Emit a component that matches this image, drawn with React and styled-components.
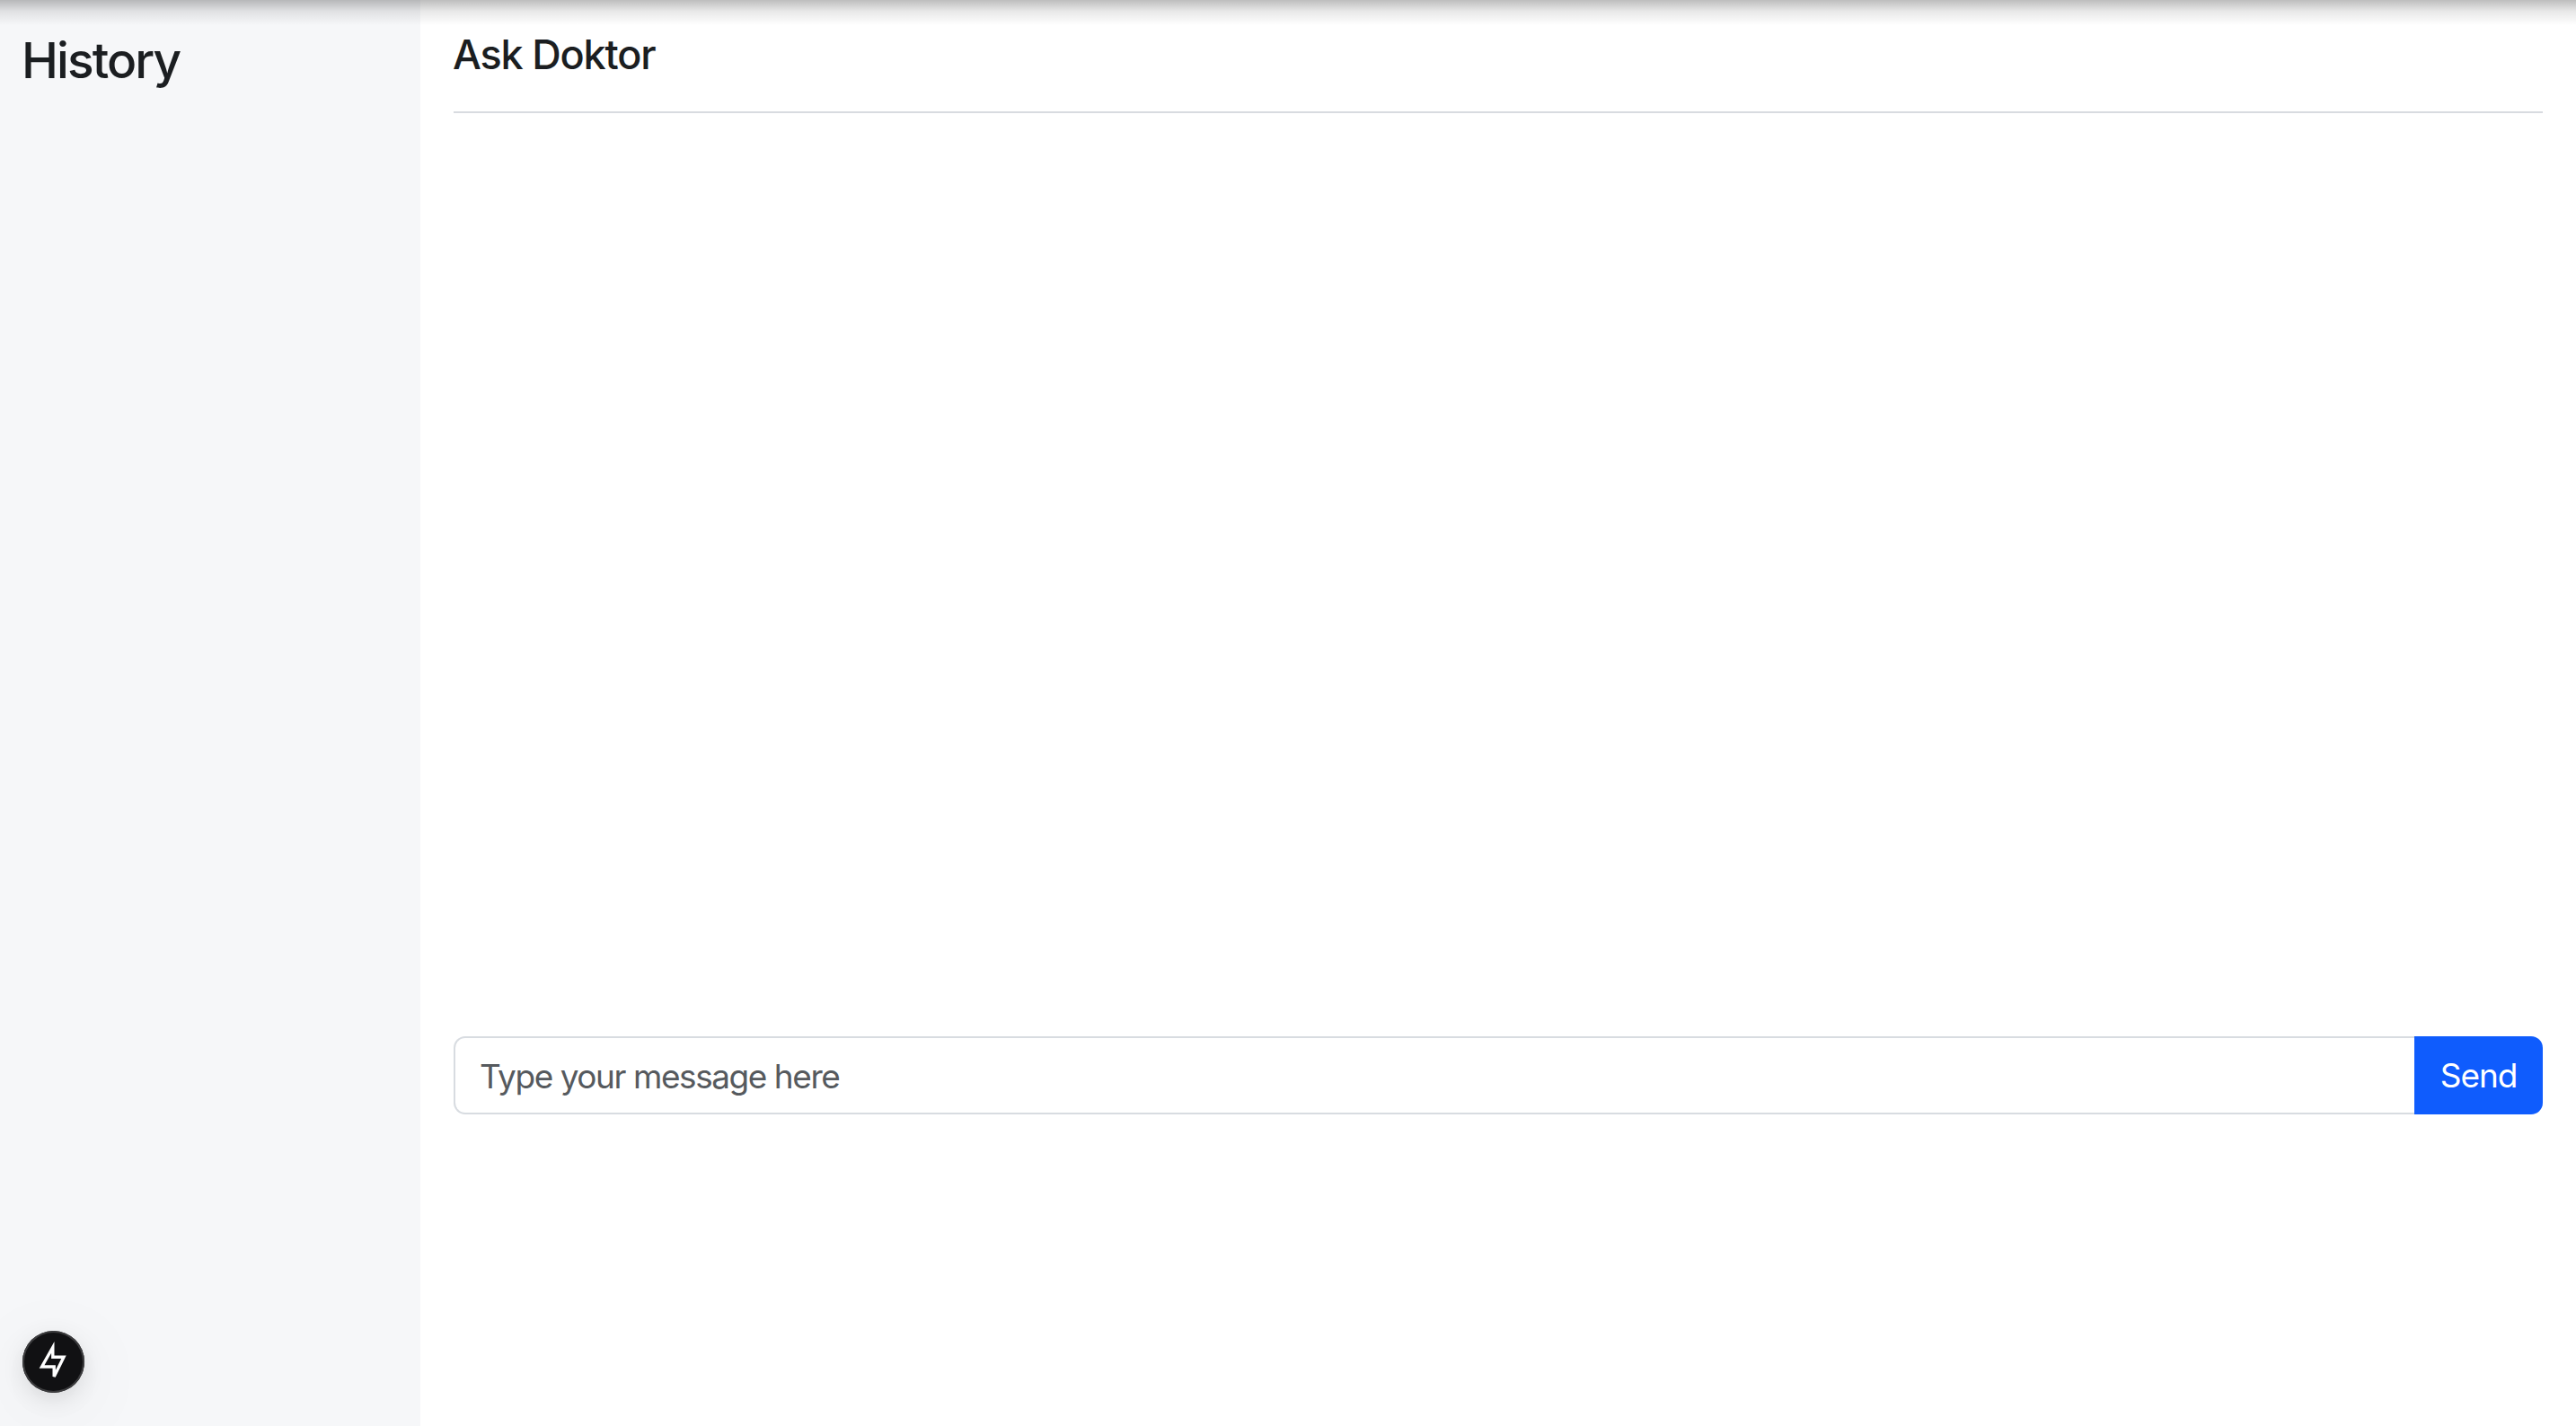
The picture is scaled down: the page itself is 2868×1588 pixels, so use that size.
import React from 'react'
import styled, { createGlobalStyle } from 'styled-components'

const GlobalStyle = createGlobalStyle`
  html, body {
    margin: 0;
    padding: 0;
    height: 100%;
    background: #fff;
    font-family: Inter, "Liberation Sans", sans-serif;
    color: #1b1e21;
  }
  * { box-sizing: border-box; }
`

export default function App() {
  return (
    <Page>
      <GlobalStyle />
      <TopShade />
      <Sidebar>
        <SideTitle>History</SideTitle>
      </Sidebar>
      <Main>
        <Header>
          <Title>Ask Doktor</Title>
        </Header>
        <Messages />
        <InputRow>
          <MessageInput placeholder="Type your message here" />
          <SendButton>Send</SendButton>
        </InputRow>
      </Main>
      <DevBadge>
        <svg width="69" height="69" viewBox="0 0 69 69" fill="none">
          <path
            d="M33.8 18.5V29.2H46L35.2 51V40H21.6Z"
            stroke="#fff"
            strokeWidth="3.4"
            strokeLinejoin="miter"
          />
        </svg>
      </DevBadge>
    </Page>
  )
}

const Page = styled.div`
  position: relative;
  display: flex;
  height: 1588px;
  overflow: hidden;
`
const TopShade = styled.div`
  position: absolute;
  top: 0;
  left: 0;
  right: 0;
  height: 28px;
  background: linear-gradient(to bottom, rgba(0, 0, 0, 0.26), rgba(0, 0, 0, 0.09) 45%, rgba(0, 0, 0, 0));
`
const Sidebar = styled.aside`
  width: 468px;
  flex-shrink: 0;
  background: #f6f7f9;
  padding: 32px 24px;
`
const SideTitle = styled.h2`
  margin: 0;
  font-size: 55px;
  line-height: 70px;
  font-weight: 500;
  letter-spacing: -1.9px;
`
const Main = styled.main`
  flex: 1;
  display: flex;
  flex-direction: column;
  padding: 0 37px;
`
const Header = styled.header`
  height: 126px;
  padding-top: 32px;
  border-bottom: 2px solid #d8dbe0;
`
const Title = styled.h1`
  margin: 0 0 0 -1px;
  font-size: 45px;
  line-height: 58px;
  font-weight: 500;
  letter-spacing: -1.2px;
`
const Messages = styled.div`
  height: 1028px;
`
const InputRow = styled.form`
  display: flex;
  height: 87px;
`
const MessageInput = styled.input`
  flex: 1;
  min-width: 0;
  border: 2px solid #d8dce1;
  border-right: 0;
  border-radius: 13px 0 0 13px;
  padding: 2px 27px 0;
  font: 400 37px Inter, "Liberation Sans", sans-serif;
  letter-spacing: -1.45px;
  outline: none;
  &::placeholder {
    color: #565a5e;
    opacity: 1;
  }
`
const SendButton = styled.button`
  width: 143px;
  border: 0;
  border-radius: 0 13px 13px 0;
  background: #0f5cfd;
  color: #fff;
  font: 400 37px Inter, "Liberation Sans", sans-serif;
  letter-spacing: -1.1px;
`
const DevBadge = styled.div`
  position: absolute;
  left: 25px;
  top: 1482px;
  width: 69px;
  height: 69px;
  border-radius: 50%;
  background: #111113;
  box-shadow: inset 0 0 0 2px #3c3c3e, 0 8px 24px rgba(0, 0, 0, 0.1), 0 16px 90px rgba(0, 0, 0, 0.07);
`
